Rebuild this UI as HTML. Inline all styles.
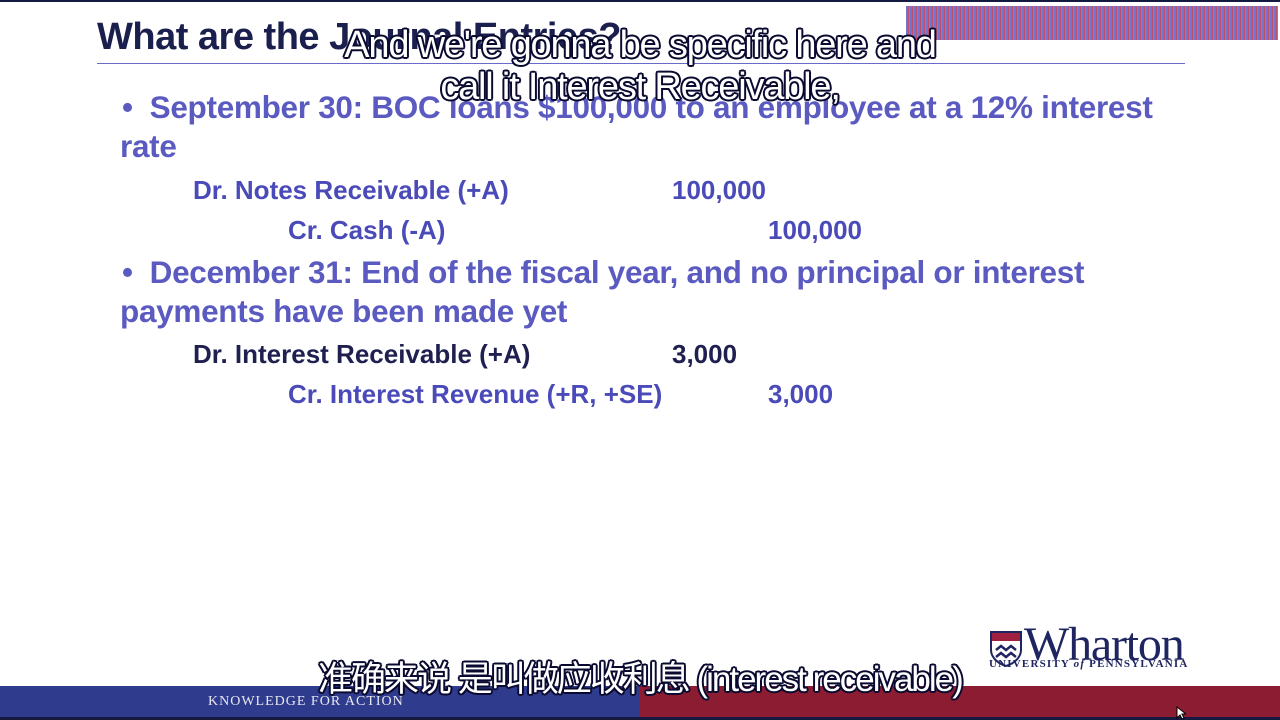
<!DOCTYPE html>
<html><head><meta charset="utf-8"><style>
body{margin:0;width:1280px;height:720px;position:relative;background:#fff;overflow:hidden;font-family:"Liberation Sans",Arial,sans-serif;}
.a{position:absolute;white-space:nowrap;font-weight:bold;}
.t{color:#1a1f4d;font-size:38px;left:97px;top:16px;letter-spacing:-0.5px}
.b{color:#5a5ac0;font-size:31.5px;letter-spacing:-0.3px}
.e{color:#4a4ab8;font-size:26px;letter-spacing:0px}
.d{color:#1f2050;font-size:26px;letter-spacing:0px}
.sub{position:absolute;color:#fff;font-weight:normal;white-space:nowrap;text-align:center;
 text-shadow:-2px 0 #0a0a30,2px 0 #0a0a30,0 -2px #0a0a30,0 2px #0a0a30,-1.5px -1.5px #0a0a30,1.5px 1.5px #0a0a30,-1.5px 1.5px #0a0a30,1.5px -1.5px #0a0a30;}
</style></head><body>
<div style="position:absolute;left:0;top:0;width:1280px;height:2px;background:#141a40"></div>
<div style="position:absolute;left:906px;top:6px;width:372px;height:34px;background:repeating-linear-gradient(90deg,#5a5ac8 0 2px,#b03050 2px 3px,#6a6ad0 3px 4px);opacity:.85"></div>
<div class="a t">What are the Journal Entries?</div>
<div style="position:absolute;left:97px;top:63px;width:1088px;height:1px;background:#6a6ac8"></div>
<div class="a b" style="left:122px;top:89px">•&nbsp;&nbsp;September 30: BOC loans $100,000 to an employee at a 12% interest</div>
<div class="a b" style="left:120px;top:128px">rate</div>
<div class="a e" style="left:193px;top:175px">Dr. Notes Receivable (+A)</div>
<div class="a e" style="left:672px;top:175px">100,000</div>
<div class="a e" style="left:288px;top:215px">Cr. Cash (-A)</div>
<div class="a e" style="left:768px;top:215px">100,000</div>
<div class="a b" style="left:122px;top:254px">•&nbsp;&nbsp;December 31: End of the fiscal year, and no principal or interest</div>
<div class="a b" style="left:120px;top:293px">payments have been made yet</div>
<div class="a d" style="left:193px;top:339px">Dr. Interest Receivable (+A)</div>
<div class="a d" style="left:672px;top:339px">3,000</div>
<div class="a e" style="left:288px;top:379px">Cr. Interest Revenue (+R, +SE)</div>
<div class="a e" style="left:768px;top:379px">3,000</div>
<div class="sub" style="left:290px;top:24px;width:700px;font-size:38px;letter-spacing:-1.2px;line-height:42px">And we're gonna be specific here and<br>call it Interest Receivable,</div>
<div style="position:absolute;left:0;top:686px;width:640px;height:32px;background:#2f3b8c"></div>
<div style="position:absolute;left:640px;top:686px;width:640px;height:32px;background:#8c1c32"></div>
<div style="position:absolute;left:0;top:717px;width:1280px;height:3px;background:#141a40"></div>
<div style="position:absolute;left:208px;top:694px;color:#e8e8f0;font-family:'Liberation Serif',serif;font-size:14px;letter-spacing:1px">KNOWLEDGE FOR ACTION</div>
<div class="sub" style="left:318px;top:651px;font-size:35px;letter-spacing:-2px;font-family:'Liberation Sans','Noto Sans CJK SC',sans-serif">准确来说 是叫做应收利息 (interest receivable)</div>
<svg style="position:absolute;left:989px;top:630px" width="34" height="38" viewBox="0 0 34 38"><path d="M2 2h30v18c0 8-8 14-15 16C10 34 2 28 2 20z" fill="#fff" stroke="#1f2560" stroke-width="2"/><rect x="3" y="3" width="28" height="8" fill="#a02040"/><path d="M7 20l5-4 5 4 5-4 5 4M7 27l5-4 5 4 5-4 5 4" stroke="#1f2560" stroke-width="2.5" fill="none"/></svg>
<div style="position:absolute;left:1024px;top:617px;font-family:'Liberation Serif',serif;font-size:48px;color:#1f2560;letter-spacing:-1.2px">Wharton</div>
<div style="position:absolute;left:989px;top:658px;font-family:'Liberation Serif',serif;font-size:11px;font-weight:bold;color:#1f2560;letter-spacing:1.2px">UNIVERSITY <i>of</i> PENNSYLVANIA</div>
<svg style="position:absolute;left:1176px;top:706px" width="10" height="14"><path d="M1 1v11l3-3 2 4 2-1-2-4h4z" fill="#fff" stroke="#000" stroke-width="1"/></svg>
</body></html>
